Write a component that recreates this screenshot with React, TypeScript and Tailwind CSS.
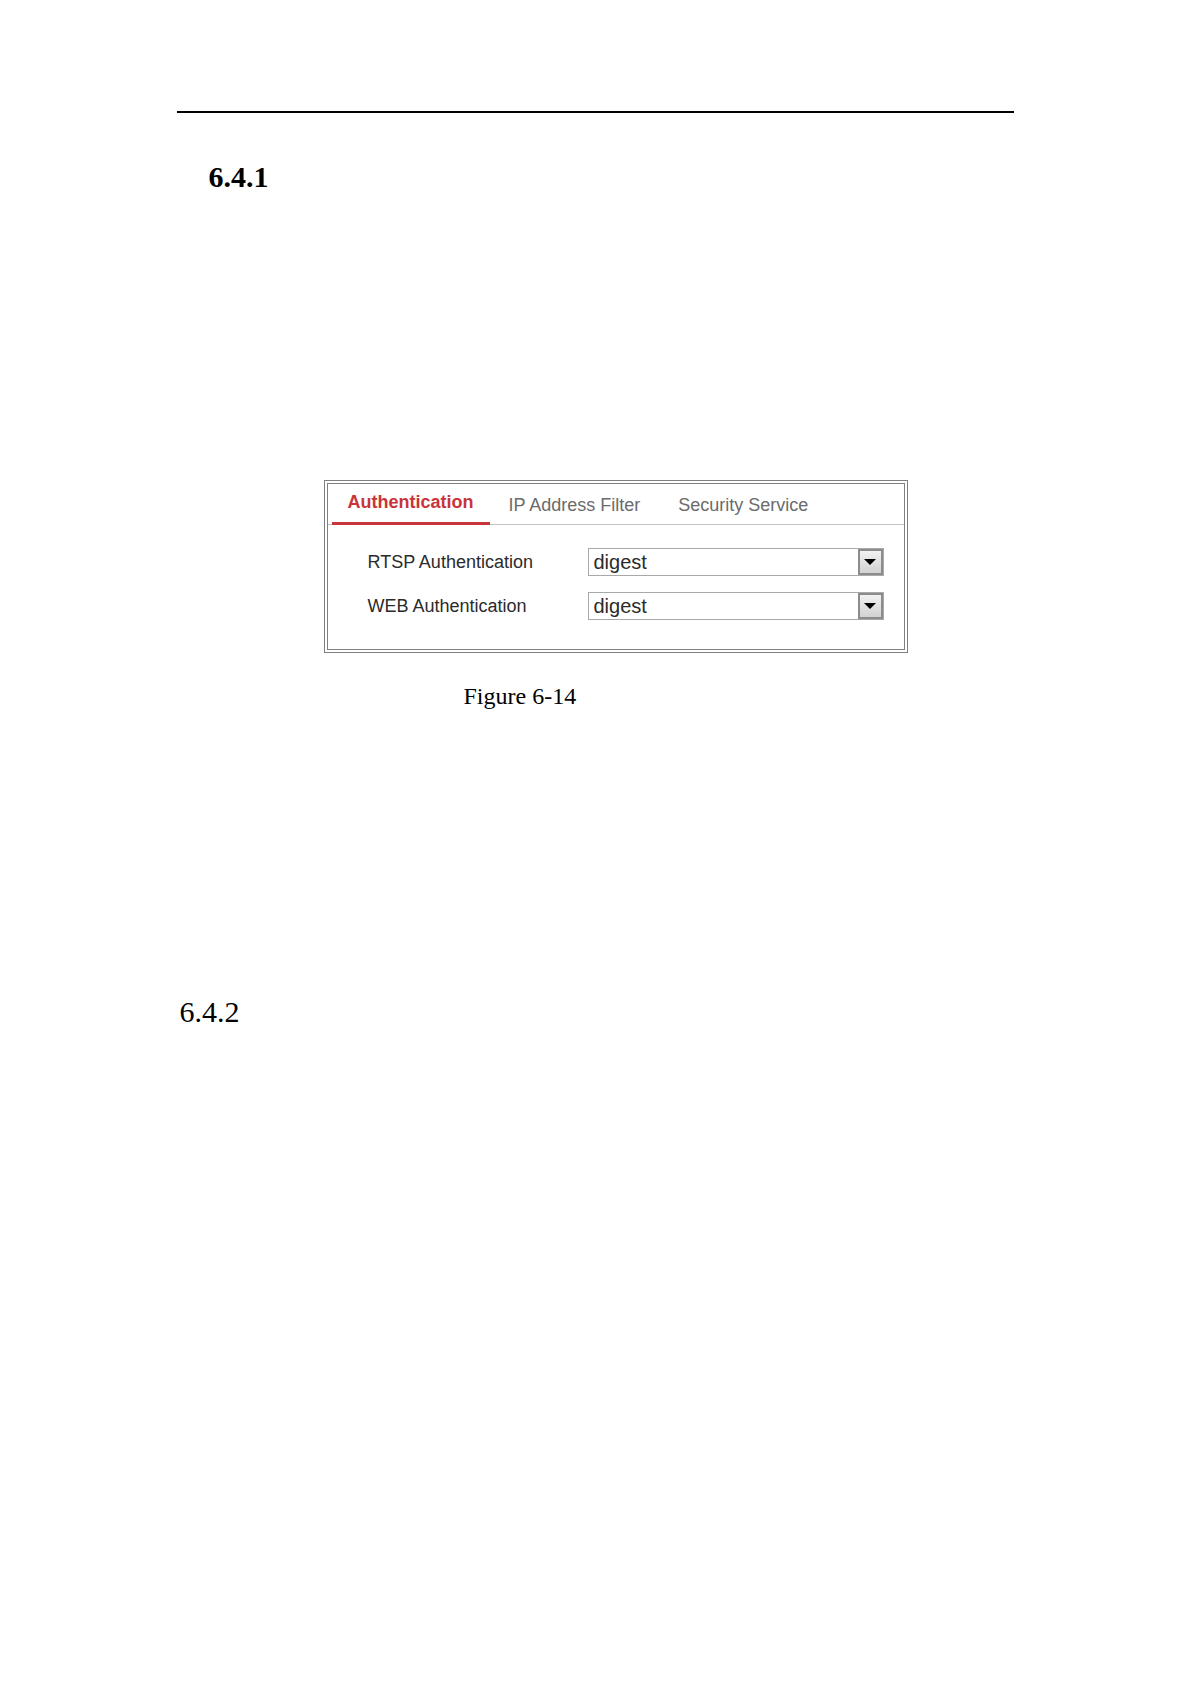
import { useState } from "react";
import clsx from "clsx";

const tabs = ["Authentication", "IP Address Filter", "Security Service"];

const fields = [
  { id: "rtsp", label: "RTSP Authentication" },
  { id: "web", label: "WEB Authentication" },
];

function SelectField({ id, label }: { id: string; label: string }) {
  return (
    <div className="flex items-center justify-between pr-5 pl-10">
      <label htmlFor={id} className="text-[18px] leading-7 text-[#2b2b2b]">
        {label}
      </label>
      <div className="relative w-[296px]">
        <select
          id={id}
          defaultValue="digest"
          className="block h-7 w-full appearance-none border border-[#a9a9a9] bg-white pl-[5px] text-[20px] leading-6 text-[#2b2b2b] outline-none"
        >
          <option value="digest">digest</option>
          <option value="basic">basic</option>
        </select>
        <span className="pointer-events-none absolute inset-y-px right-px flex w-[25px] items-center justify-center border-2 border-[#8c8c8c] bg-linear-to-b from-[#f2f2f2] to-[#d2d2d2]">
          <svg width="12" height="6" viewBox="0 0 12 6" aria-hidden="true">
            <path d="M0 0H12L6 6Z" fill="#000" />
          </svg>
        </span>
      </div>
    </div>
  );
}

export default function App() {
  const [active, setActive] = useState(tabs[0]);

  return (
    <main className="mx-auto max-w-[837px] bg-white pt-[111px] font-['Liberation_Serif',serif] text-black">
      <hr className="border-t-2 border-black" />
      <h2 className="mt-12 pl-8 text-[30px] leading-8 font-bold">6.4.1</h2>

      <figure className="mt-[287px] pr-[106px] pl-[147px]">
        <div className="border-4 border-double border-[#7f7f7f] pb-[29px] font-['Liberation_Sans',sans-serif]">
          <div role="tablist" className="flex border-b border-[#c4c4c4] pl-1">
            {tabs.map((tab) => (
              <button
                key={tab}
                role="tab"
                aria-selected={active === tab}
                onClick={() => setActive(tab)}
                className={clsx(
                  "-mb-px h-[41px] border-b-3 text-[18px] leading-6",
                  active === tab
                    ? "border-[#c9343a] px-4 pb-0.5 font-bold text-[#c9343a]"
                    : "border-transparent px-[19px] pt-1 text-[#6b6b6b]",
                )}
              >
                {tab}
              </button>
            ))}
          </div>
          <div className="flex flex-col gap-4 pt-[23px]">
            {fields.map((field) => (
              <SelectField key={field.id} {...field} />
            ))}
          </div>
        </div>
        <figcaption className="mt-[27px] pl-[140px] text-[24px] leading-8">Figure 6-14</figcaption>
      </figure>

      <h2 className="mt-[284px] pl-[3px] text-[30px] leading-8">6.4.2</h2>
    </main>
  );
}
